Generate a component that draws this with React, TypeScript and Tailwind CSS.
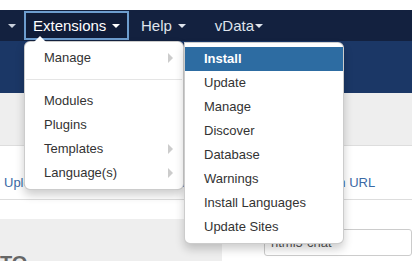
const MAIN_ITEMS = [
  { label: 'Manage', sub: true },
  { label: 'divider' },
  { label: 'Modules' },
  { label: 'Plugins' },
  { label: 'Templates', sub: true },
  { label: 'Language(s)', sub: true },
];

const SUB_ITEMS = ['Install', 'Update', 'Manage', 'Discover', 'Database', 'Warnings', 'Install Languages', 'Update Sites'];

const Caret = ({ className }: { className?: string }) => (
  <span className={`inline-block w-0 h-0 border-l-[4px] border-r-[4px] border-t-[4px] border-l-transparent border-r-transparent ${className ?? 'border-t-[#dfe4ec]'}`}></span>
);

export default function App() {
  return (
    <div className="relative w-[412px] h-[261px] overflow-hidden bg-white font-['Liberation_Sans',Arial,sans-serif]">
      <div className="h-[10px] bg-white"></div>

      {/* Navbar */}
      <nav className="h-[31px] bg-[#13213f] flex items-center">
        <div className="w-[24px] pl-[8px] flex items-center">
          <Caret className="border-t-[#c9d0db]" />
        </div>
        <div className="w-[105px] h-[29px] border-2 border-[#6d9dcf] bg-[#101c38] flex items-center pl-[7px] gap-[6px]">
          <span className="text-[15px] text-white leading-none">Extensions</span>
          <Caret className="border-t-white" />
        </div>
        <div className="ml-[12px] flex items-center gap-[6px]">
          <span className="text-[15px] text-[#dfe4ec] leading-none">Help</span>
          <Caret />
        </div>
        <div className="ml-[29px] flex items-center gap-[1px]">
          <span className="text-[15px] text-[#dfe4ec] leading-none">vData</span>
          <Caret />
        </div>
      </nav>

      <div className="h-[52px] bg-[#1b3766]"></div>
      <div className="h-[52px] bg-[#eeeeee]"></div>

      {/* Tabs */}
      <div className="h-[55px] border-t border-b border-[#dddddd] flex pt-[28px] pl-[4px] gap-[27px] text-[13px] leading-[18px] text-[#3b6aa5] whitespace-nowrap">
        <span>Upload Package File</span>
        <span>Install from Folder</span>
        <span>Install from URL</span>
      </div>

      <div className="h-[19px] bg-white"></div>
      <div className="flex h-[42px]">
        <div className="w-[222px] bg-[#eeeeee] pt-[34px] overflow-hidden">
          <span className="text-[20px] font-bold leading-none text-[#666666]">TO</span>
        </div>
        <div className="flex-1 bg-white pl-[42px] pt-[10px]">
          <div className="h-[27px] border border-[#cccccc] rounded-[3px] px-[6px] flex items-center text-[13px] text-[#555555]">html5-chat</div>
        </div>
      </div>

      {/* Extensions dropdown */}
      <div className="absolute left-[24px] top-[41px] w-[160px] bg-white border border-[rgba(0,0,0,0.2)] rounded-[6px] shadow-[0_5px_10px_rgba(0,0,0,0.2)] py-[4px] z-10">
        <span className="absolute left-[9px] -top-[6px] w-0 h-0 border-l-[6px] border-r-[6px] border-b-[6px] border-l-transparent border-r-transparent border-b-white"></span>
        {MAIN_ITEMS.map((it, i) =>
          it.label === 'divider' ? (
            <div key={i} className="h-px bg-[#e5e5e5] my-[9px] mx-[1px]"></div>
          ) : (
            <div key={i} className="relative h-[24px] pl-[19px] flex items-center text-[13px] text-[#333333]">
              {it.label}
              {it.sub && (
                <span className="absolute right-[10px] top-[7px] w-0 h-0 border-t-[5px] border-b-[5px] border-l-[5px] border-t-transparent border-b-transparent border-l-[#cccccc]"></span>
              )}
            </div>
          )
        )}
      </div>

      {/* Manage submenu */}
      <div className="absolute left-[184px] top-[42px] w-[160px] bg-white border border-[rgba(0,0,0,0.2)] rounded-[0_6px_6px_6px] shadow-[0_5px_10px_rgba(0,0,0,0.2)] py-[4px] z-20">
        {SUB_ITEMS.map((label, i) => (
          <div
            key={label + i}
            className={
              i === 0
                ? 'h-[24px] pl-[19px] flex items-center text-[13px] font-bold text-white bg-[#2d6ca2]'
                : 'h-[24px] pl-[19px] flex items-center text-[13px] text-[#333333]'
            }
          >
            {label}
          </div>
        ))}
      </div>
    </div>
  );
}
